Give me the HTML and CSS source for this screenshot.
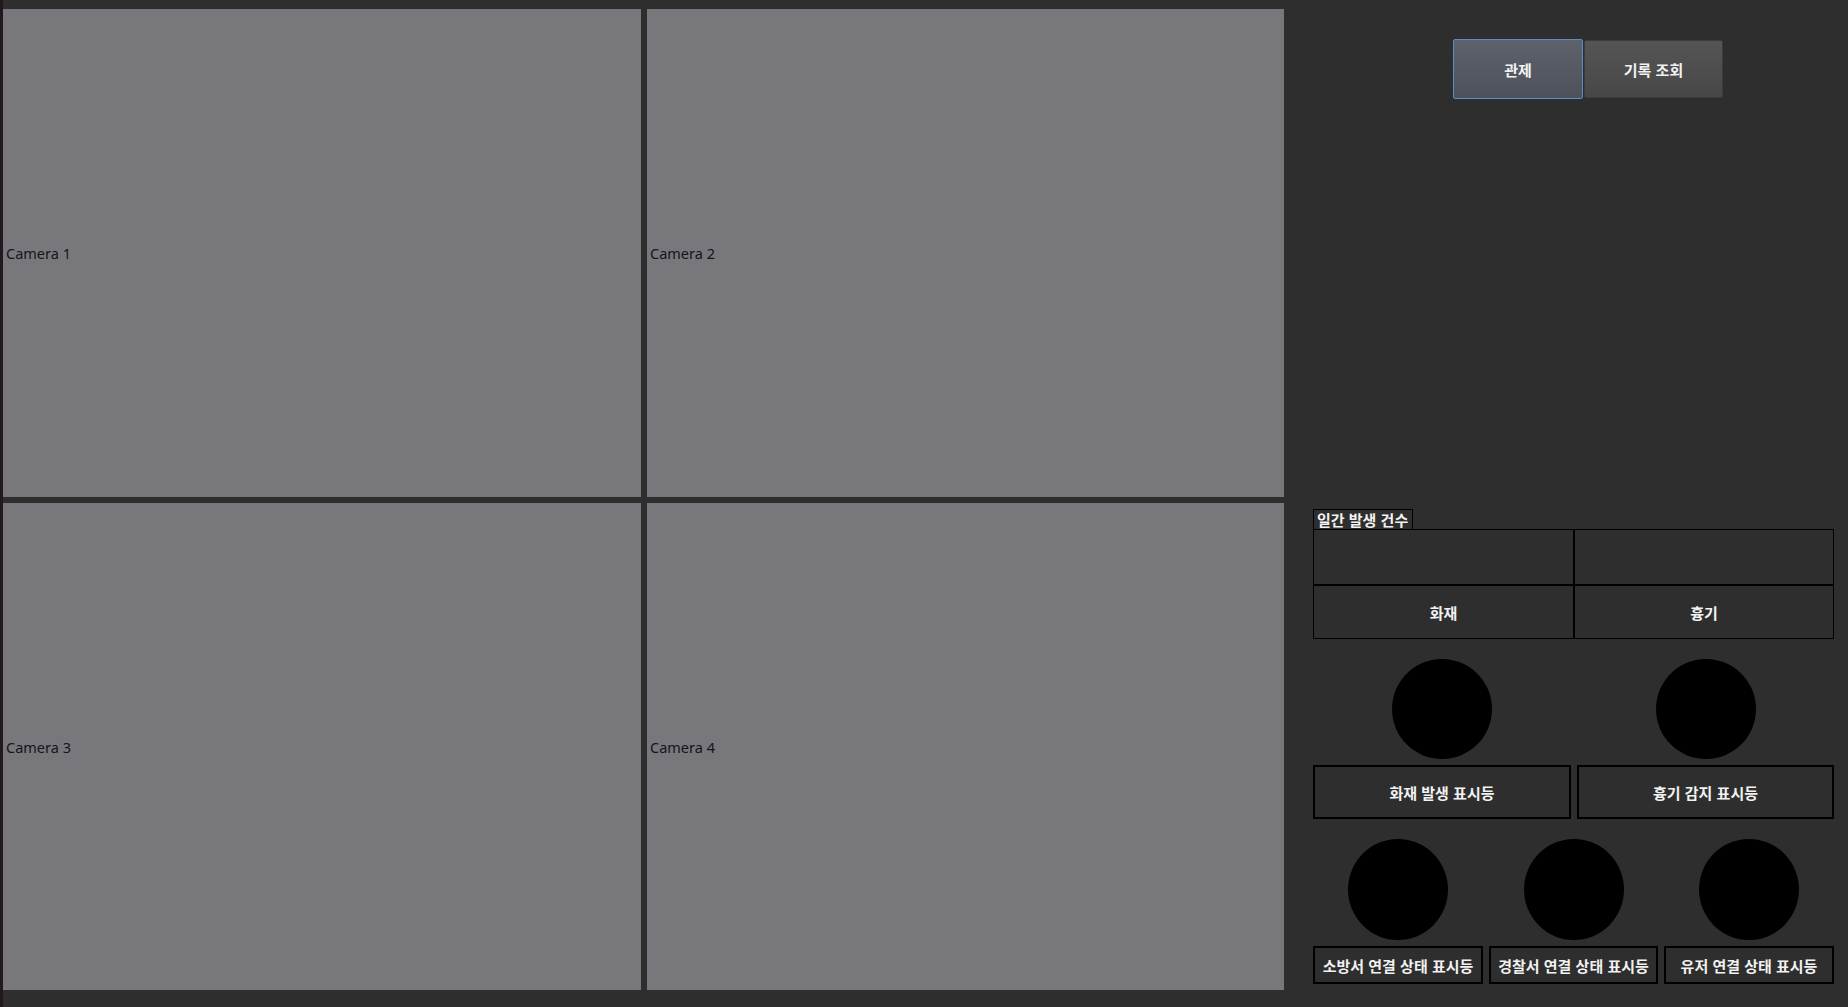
FILE: index.html
```html
<!DOCTYPE html>
<html lang="ko">
<head>
<meta charset="utf-8">
<title>관제</title>
<link rel="stylesheet" href="styles.css">
</head>
<body>
<div class="strip"></div>
<div class="cams">
  <div class="cam"><span>Camera 1</span></div>
  <div class="cam"><span>Camera 2</span></div>
  <div class="cam"><span>Camera 3</span></div>
  <div class="cam"><span>Camera 4</span></div>
</div>
<div class="panel">
  <div class="tabs">
    <button class="tab tab-active">관제</button>
    <button class="tab tab-plain">기록 조회</button>
  </div>
  <div class="daily">
    <div class="daily-title">일간 발생 건수</div>
    <div class="daily-table">
      <div class="cell"></div>
      <div class="cell"></div>
      <div class="cell">화재</div>
      <div class="cell">흉기</div>
    </div>
  </div>
  <div class="lamps two">
    <div class="lamp"><div class="dot"></div><div class="lamp-label big">화재 발생 표시등</div></div>
    <div class="lamp"><div class="dot"></div><div class="lamp-label big">흉기 감지 표시등</div></div>
  </div>
  <div class="lamps three">
    <div class="lamp"><div class="dot"></div><div class="lamp-label small">소방서 연결 상태 표시등</div></div>
    <div class="lamp"><div class="dot"></div><div class="lamp-label small">경찰서 연결 상태 표시등</div></div>
    <div class="lamp"><div class="dot"></div><div class="lamp-label small">유저 연결 상태 표시등</div></div>
  </div>
</div>
</body>
</html>
```
FILE: styles.css
```css
html, body {
  margin: 0;
  padding: 0;
}
body {
  width: 1848px;
  height: 1007px;
  background: #2e2e2e;
  display: flex;
  overflow: hidden;
  font-family: "Noto Sans CJK KR", "Noto Sans", sans-serif;
}
.strip {
  width: 3px;
  flex: none;
  background: #221920;
}
.cams {
  flex: none;
  width: 1281px;
  padding-top: 9px;
  display: grid;
  grid-template-columns: 638px 637px;
  grid-template-rows: 488px 487px;
  column-gap: 6px;
  row-gap: 6px;
  align-content: start;
}
.cam {
  background: #78777c;
  display: flex;
  align-items: center;
  padding-left: 3px;
  font-family: "Noto Sans", "Open Sans", sans-serif;
  font-size: 14.5px;
  color: #15151a;
}
.panel {
  flex: 1;
  padding: 0 14px 0 29px;
  display: flex;
  flex-direction: column;
  color: #f2f2f2;
}
.tabs {
  display: flex;
  gap: 1px;
  margin-top: 39px;
  margin-left: 140px;
  height: 60px;
}
.tab {
  font-family: "Noto Sans CJK KR", sans-serif;
  font-weight: 700;
  font-size: 15px;
  color: #f2f2f2;
  border-radius: 2px;
  padding: 0;
  cursor: pointer;
}
.tab-active {
  width: 130px;
  height: 60px;
  border: 1px solid #5a8cc6;
  background: linear-gradient(#5e626a, #4d525a);
}
.tab-plain {
  width: 139px;
  height: 58px;
  margin-top: 1px;
  border: 1px solid #3c3c3c;
  background: linear-gradient(#555555, #474747);
}
.daily {
  margin-top: 410px;
}
.daily-title {
  width: 98px;
  height: 19px;
  border: 1px solid #000;
  border-bottom: none;
  font-size: 15px;
  font-weight: 700;
  line-height: 20px;
  text-indent: 3px;
  white-space: nowrap;
  box-sizing: content-box;
}
.daily-table {
  display: grid;
  grid-template-columns: 261px 260px;
  grid-template-rows: 56px 54px;
}
.cell {
  border: 1px solid #000;
  display: flex;
  align-items: center;
  justify-content: center;
  font-size: 15px;
  font-weight: 700;
}
.lamps {
  display: grid;
  gap: 6px;
}
.lamps.two {
  margin-top: 20px;
  grid-template-columns: 258px 257px;
}
.lamps.three {
  margin-top: 20px;
  grid-template-columns: 170px 169px 170px;
}
.lamp {
  display: flex;
  flex-direction: column;
  align-items: center;
  gap: 6px;
}
.dot {
  width: 100px;
  height: 100px;
  border-radius: 50%;
  background: #000;
}
.lamps.three .dot {
  height: 101px;
}
.lamp-label {
  align-self: stretch;
  border: 2px solid #000;
  display: flex;
  align-items: center;
  justify-content: center;
  font-size: 15px;
  font-weight: 700;
  white-space: nowrap;
}
.lamp-label.big {
  height: 50px;
}
.lamp-label.small {
  height: 34px;
}
```
